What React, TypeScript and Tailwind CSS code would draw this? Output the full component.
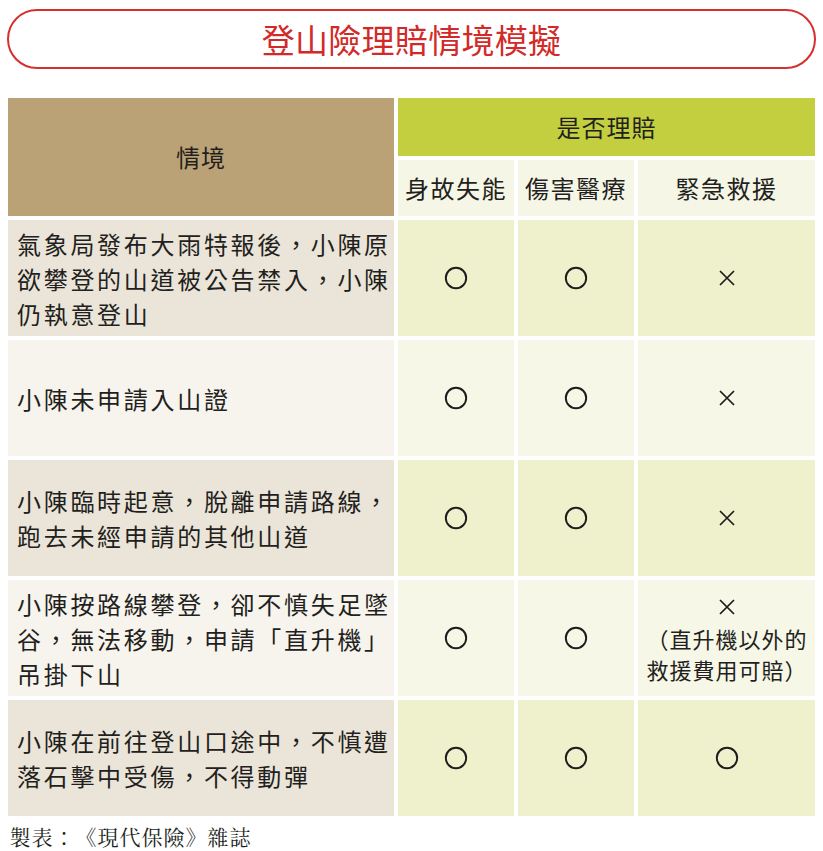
import React from "react";

const sans = { fontFamily: '"Noto Sans CJK TC", "Noto Sans", sans-serif' };

type Mark = "o" | "x" | "xnote";

const rows: { lines: string[]; marks: Mark[] }[] = [
  {
    lines: ["氣象局發布大雨特報後，小陳原", "欲攀登的山道被公告禁入，小陳", "仍執意登山"],
    marks: ["o", "o", "x"],
  },
  { lines: ["小陳未申請入山證"], marks: ["o", "o", "x"] },
  {
    lines: ["小陳臨時起意，脫離申請路線，", "跑去未經申請的其他山道"],
    marks: ["o", "o", "x"],
  },
  {
    lines: ["小陳按路線攀登，卻不慎失足墜", "谷，無法移動，申請「直升機」", "吊掛下山"],
    marks: ["o", "o", "xnote"],
  },
  {
    lines: ["小陳在前往登山口途中，不慎遭", "落石擊中受傷，不得動彈"],
    marks: ["o", "o", "o"],
  },
];

function Circle() {
  return (
    <svg width="24" height="24" viewBox="0 0 24 24" aria-label="○">
      <circle cx="12" cy="12" r="10.2" fill="none" stroke="#1c1c1c" strokeWidth="1.9" />
    </svg>
  );
}

function Cross() {
  return (
    <svg width="18" height="18" viewBox="0 0 18 18" aria-label="×">
      <path d="M2 2 L16 16 M16 2 L2 16" stroke="#1c1c1c" strokeWidth="1.7" fill="none" />
    </svg>
  );
}

function Cells({ text, cell }: { text: string; cell: string }) {
  return (
    <span className="inline-flex">
      {Array.from(text).map((c, i) => (
        <span key={i} className={`${cell} inline-block text-center`}>
          {c}
        </span>
      ))}
    </span>
  );
}

export default function App() {
  return (
    <div className="w-[823px] h-[851px] bg-white text-[#231f20] overflow-hidden" style={sans}>
      <div className="pt-[9px] px-[7px]">
        <div className="h-[60px] rounded-full border-2 border-[#d5302d] flex items-center justify-center">
          <span className="text-[33px] leading-none text-[#d22a28] tracking-[0.3px]">
            登山險理賠情境模擬
          </span>
        </div>
      </div>

      <div className="mt-[29px] ml-[8px] grid grid-cols-[386px_116px_116px_177px] grid-rows-[58px_56px_repeat(5,116px)] gap-x-[4px] gap-y-[4px]">
        <div className="row-span-2 bg-[#bba276] flex items-center justify-center text-[24px] tracking-[1px]">
          情境
        </div>
        <div className="col-span-3 bg-[#c3cf3e] flex items-center justify-center text-[24px] tracking-[1px]">
          是否理賠
        </div>
        <div className="bg-[#f6f6e6] flex items-center justify-center text-[24px] tracking-[1.5px] whitespace-nowrap">
          身故失能
        </div>
        <div className="bg-[#f6f6e6] flex items-center justify-center text-[24px] tracking-[1.5px] whitespace-nowrap">
          傷害醫療
        </div>
        <div className="bg-[#f6f6e6] flex items-center justify-center text-[24px] tracking-[1.5px] whitespace-nowrap">
          緊急救援
        </div>

        {rows.map((r, i) => {
          const odd = i % 2 === 0;
          const left = odd ? "bg-[#ebe5d9]" : "bg-[#f7f4ee]";
          const right = odd ? "bg-[#eff1cd]" : "bg-[#f7f7e8]";
          return (
            <React.Fragment key={i}>
              <div className={`${left} flex flex-col justify-center pl-[9px] text-[24px] leading-[35px] tracking-[2.7px] whitespace-nowrap`}>
                {r.lines.map((l, j) => (
                  <div key={j}>{l}</div>
                ))}
              </div>
              {r.marks.map((m, k) => (
                <div key={k} className={`${right} flex flex-col items-center justify-center`}>
                  {m === "o" && <Circle />}
                  {m === "x" && <Cross />}
                  {m === "xnote" && (
                    <div className="flex flex-col items-center text-[22px] leading-[31px] whitespace-nowrap">
                      <div className="h-[31px] flex items-center"><Cross /></div>
                      <div><Cells text="（直升機以外的" cell="w-[23px]" /></div>
                      <div><Cells text="救援費用可賠）" cell="w-[23px]" /></div>
                    </div>
                  )}
                </div>
              ))}
            </React.Fragment>
          );
        })}
      </div>

      <div
        className="mt-[8px] ml-[9px] text-[21px] leading-[24px]"
        style={{ fontFamily: '"Noto Serif CJK TC", "Noto Serif CJK", "Noto Sans CJK TC", serif' }}
      >
        <Cells text="製表：《現代保險》雜誌" cell="w-[22px]" />
      </div>
    </div>
  );
}
